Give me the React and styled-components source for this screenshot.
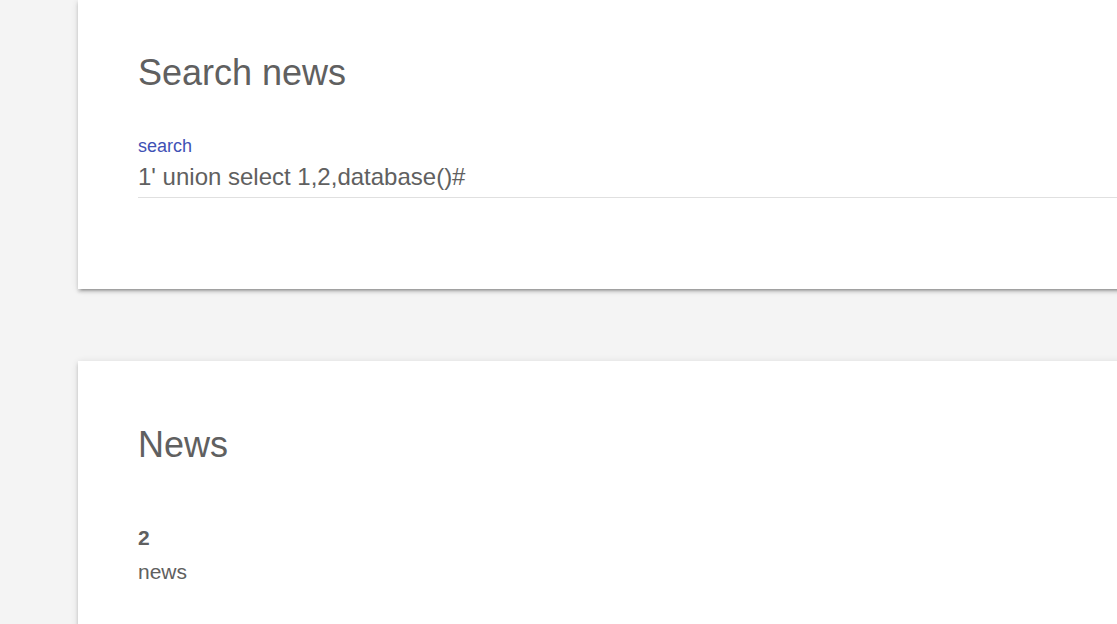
import React from 'react';
import styled, { createGlobalStyle } from 'styled-components';

const GlobalStyle = createGlobalStyle`
  html, body {
    margin: 0;
    padding: 0;
    background: #f4f4f4;
    overflow: hidden;
  }
  body {
    font-family: "Liberation Sans", Arial, sans-serif;
    color: #606060;
  }
`;

const Page = styled.div`
  display: flex;
  flex-direction: column;
  gap: 72px;
  padding-left: 78px;
  width: 1400px;
`;

const Card = styled.section`
  box-sizing: border-box;
  background: #fff;
  padding: ${props => props.top}px 60px ${props => props.bottom}px 60px;
  box-shadow: 0 3px 3px 0 rgba(0, 0, 0, 0.16), 0 4px 2px -3px rgba(0, 0, 0, 0.24),
    0 1px 7px 0 rgba(0, 0, 0, 0.12);
`;

const Title = styled.h2`
  margin: 0;
  font-size: 36px;
  line-height: 48px;
  font-weight: 400;
  color: #606060;
`;

const Field = styled.div`
  display: flex;
  flex-direction: column;
  margin-top: 37px;
  padding-bottom: 5px;
  border-bottom: 1.5px solid #e0e0e0;
`;

const Label = styled.label`
  font-size: 18px;
  line-height: 24px;
  color: #3f51b5;
  margin-bottom: 4px;
`;

const Input = styled.input`
  border: none;
  outline: none;
  padding: 0;
  background: transparent;
  font-family: "Liberation Sans", Arial, sans-serif;
  font-size: 24px;
  line-height: 30px;
  height: 30px;
  color: #606060;
`;

const NewsList = styled.div`
  margin-top: 52px;
`;

const NewsId = styled.div`
  font-size: 21px;
  line-height: 34px;
  font-weight: 700;
`;

const NewsText = styled.div`
  font-size: 21px;
  line-height: 34px;
`;

export default function App() {
  return (
    <>
      <GlobalStyle />
      <Page>
        <Card top={49} bottom={91}>
          <Title>Search news</Title>
          <Field>
            <Label htmlFor="search">search</Label>
            <Input id="search" defaultValue="1' union select 1,2,database()#" />
          </Field>
        </Card>
        <Card top={60} bottom={80}>
          <Title>News</Title>
          <NewsList>
            <NewsId>2</NewsId>
            <NewsText>news</NewsText>
          </NewsList>
        </Card>
      </Page>
    </>
  );
}
